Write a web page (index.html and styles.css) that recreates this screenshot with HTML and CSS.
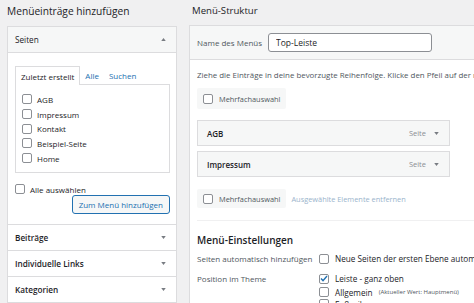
FILE: index.html
```html
<!DOCTYPE html>
<html lang="de">
<head>
    <meta charset="UTF-8" />
    <title>Menüs</title>
    <link rel="stylesheet" href="styles.css">
</head>
<body>
    <div class="page">
        <div class="col-left">
            <h2 class="col-title">Menüeinträge hinzufügen</h2>
            <div class="accordion">
                <div class="acc-section open">
                    <div class="acc-title">
                        <span>Seiten</span>
                        <svg class="arrow" width="5" height="3" viewBox="0 0 6 4"><path d="M0 4 L3 0 L6 4 Z" fill="#787c82"/></svg>
                    </div>
                    <div class="acc-body">
                        <div class="tabs">
                            <span class="tab active">Zuletzt erstellt</span>
                            <span class="tab">Alle</span>
                            <span class="tab">Suchen</span>
                        </div>
                        <div class="tab-panel">
                            <label class="check-row"><span class="box"></span>AGB</label>
                            <label class="check-row"><span class="box"></span>Impressum</label>
                            <label class="check-row"><span class="box"></span>Kontakt</label>
                            <label class="check-row"><span class="box"></span>Beispiel-Seite</label>
                            <label class="check-row"><span class="box"></span>Home</label>
                        </div>
                        <label class="check-row select-all"><span class="box"></span>Alle auswählen</label>
                        <div class="add-row">
                            <button class="btn-secondary">Zum Menü hinzufügen</button>
                        </div>
                    </div>
                </div>
                <div class="acc-section">
                    <div class="acc-title">
                        <span>Beiträge</span>
                        <svg class="arrow" width="5" height="3" viewBox="0 0 6 4"><path d="M0 0 L3 4 L6 0 Z" fill="#787c82"/></svg>
                    </div>
                </div>
                <div class="acc-section">
                    <div class="acc-title">
                        <span>Individuelle Links</span>
                        <svg class="arrow" width="5" height="3" viewBox="0 0 6 4"><path d="M0 0 L3 4 L6 0 Z" fill="#787c82"/></svg>
                    </div>
                </div>
                <div class="acc-section">
                    <div class="acc-title">
                        <span>Kategorien</span>
                        <svg class="arrow" width="5" height="3" viewBox="0 0 6 4"><path d="M0 0 L3 4 L6 0 Z" fill="#787c82"/></svg>
                    </div>
                </div>
            </div>
        </div>

        <div class="col-right">
            <h2 class="col-title">Menü-Struktur</h2>
            <div class="menu-panel">
                <div class="menu-header">
                    <span class="muted">Name des Menüs</span>
                    <input class="menu-name" type="text" value="Top-Leiste" />
                </div>
                <div class="menu-body">
                    <p class="hint">Ziehe die Einträge in deine bevorzugte Reihenfolge. Klicke den Pfeil auf der rechten Seite des Eintrags, um weitere Optionen anzuzeigen.</p>
                    <div class="bulk-row">
                        <label class="bulk-toggle"><span class="box"></span>Mehrfachauswahl</label>
                    </div>
                    <ul class="menu-items">
                        <li class="menu-item">
                            <span class="item-title">AGB</span>
                            <span class="item-type">Seite</span>
                            <svg class="arrow" width="5" height="3" viewBox="0 0 6 4"><path d="M0 0 L3 4 L6 0 Z" fill="#787c82"/></svg>
                        </li>
                        <li class="menu-item">
                            <span class="item-title">Impressum</span>
                            <span class="item-type">Seite</span>
                            <svg class="arrow" width="5" height="3" viewBox="0 0 6 4"><path d="M0 0 L3 4 L6 0 Z" fill="#787c82"/></svg>
                        </li>
                    </ul>
                    <div class="bulk-row">
                        <label class="bulk-toggle"><span class="box"></span>Mehrfachauswahl</label>
                        <span class="link-disabled">Ausgewählte Elemente entfernen</span>
                    </div>

                    <div class="settings">
                        <h3>Menü-Einstellungen</h3>
                        <div class="setting">
                            <span class="muted setting-label">Seiten automatisch hinzufügen</span>
                            <div class="setting-opts">
                                <label class="opt"><span class="box"></span>Neue Seiten der ersten Ebene automatisch diesem Menü hinzufügen</label>
                            </div>
                        </div>
                        <div class="setting">
                            <span class="muted setting-label">Position im Theme</span>
                            <div class="setting-opts">
                                <label class="opt"><span class="box checked"><svg width="8" height="7" viewBox="0 0 8 7"><path d="M1 3.6 L3 5.6 L7 1" fill="none" stroke="#2271b1" stroke-width="1.4"/></svg></span>Leiste - ganz oben</label>
                                <label class="opt"><span class="box"></span>Allgemein <small>(Aktueller Wert: Hauptmenü)</small></label>
                                <label class="opt"><span class="box"></span>Fußzeile</label>
                            </div>
                        </div>
                    </div>
                </div>
            </div>
        </div>
    </div>
</body>
</html>
```

FILE: styles.css
```css
:root {
    --bg: #f0f0f1;
    --panel: #ffffff;
    --soft: #f6f7f7;
    --line: #dcdcde;
    --text: #1d2327;
    --muted: #50575e;
    --blue: #2271b1;
}

html,
body {
    height: 303px;
}

body {
    margin: 0;
    background-color: var(--bg);
    color: var(--text);
    font-family: 'Open Sans', 'Noto Sans', Arial, sans-serif;
    font-size: 8px;
    overflow: hidden;
}

.page {
    display: flex;
    gap: 12px;
    padding-left: 7px;
    width: 640px;
}

.col-left {
    width: 170px;
    flex-shrink: 0;
}

.col-right {
    width: 340px;
    flex-shrink: 0;
}

.col-title {
    margin: 0;
    height: 25px;
    line-height: 22px;
    font-size: 10.2px;
    font-weight: 400;
    color: var(--text);
}

.col-right .col-title {
    padding-left: 3px;
    font-size: 9.6px;
}

/* left accordion */
.accordion {
    background-color: var(--panel);
    border: 1px solid var(--line);
    margin-top: 1px;
}

.acc-section + .acc-section {
    border-top: 1px solid var(--line);
}

.acc-title {
    height: 25px;
    display: flex;
    align-items: center;
    justify-content: space-between;
    padding: 0 10px 0 7px;
    font-size: 8.2px;
    font-weight: 600;
}

.open .acc-title {
    background-color: var(--soft);
    border-bottom: 1px solid var(--line);
    font-weight: 400;
}

.acc-body {
    padding: 13px 6px 10px 7px;
}

.tabs {
    display: flex;
    height: 18px;
    align-items: stretch;
}

.tab {
    display: flex;
    align-items: center;
    padding: 0 5px;
    color: var(--blue);
}

.tab.active {
    color: var(--text);
    border: 1px solid var(--line);
    border-bottom: none;
    background-color: var(--panel);
    margin-bottom: -1px;
    position: relative;
}

.tab-panel {
    border: 1px solid var(--line);
    height: 78px;
    padding: 7px 6px 2px;
}

.check-row {
    display: flex;
    align-items: center;
    gap: 5px;
    height: 14.7px;
    color: var(--text);
}

.box {
    display: inline-flex;
    align-items: center;
    justify-content: center;
    width: 8px;
    height: 8px;
    border: 1px solid #8c8f94;
    border-radius: 2px;
    background-color: #fff;
    flex-shrink: 0;
}

.select-all {
    margin-top: 10px;
    height: 12px;
}

.add-row {
    display: flex;
    justify-content: flex-end;
}

.btn-secondary {
    height: 19px;
    padding: 0 6px;
    font-family: inherit;
    font-size: 8px;
    color: var(--blue);
    background-color: var(--soft);
    border: 1px solid var(--blue);
    border-radius: 3px;
}

/* right panel */
.menu-panel {
    background-color: var(--panel);
    border: 1px solid var(--line);
    border-right: none;
}

.menu-header {
    height: 33px;
    display: flex;
    align-items: center;
    gap: 6px;
    padding-left: 7px;
    background-color: var(--soft);
    border-bottom: 1px solid var(--line);
}

.muted {
    color: var(--muted);
}

.menu-name {
    width: 164px;
    height: 19px;
    box-sizing: border-box;
    padding: 0 7px;
    font-family: inherit;
    font-size: 8.5px;
    color: var(--text);
    border: 1px solid #8c8f94;
    border-radius: 3px;
    background-color: #fff;
}

.menu-body {
    padding: 0 0 0 7px;
}

.hint {
    margin: 9px 0 7px;
    line-height: 12px;
    font-size: 7.9px;
    white-space: nowrap;
    color: var(--muted);
}

.bulk-row {
    display: flex;
    align-items: center;
    gap: 5px;
    font-size: 7.4px;
}

.bulk-toggle {
    display: flex;
    align-items: center;
    gap: 6px;
    height: 21px;
    padding: 0 6px;
    background-color: var(--soft);
    border-radius: 2px;
    color: var(--muted);
}

.menu-items + .bulk-row .bulk-toggle {
    height: 19px;
}

.link-disabled {
    color: #9ab4cc;
}

.menu-items {
    list-style: none;
    margin: 11px 0 12px;
    padding: 0;
    width: 253px;
}

.menu-item {
    display: flex;
    align-items: center;
    height: 24px;
    padding: 0 10px 0 9px;
    background-color: var(--soft);
    border: 1px solid var(--line);
    font-weight: 600;
}

.menu-item + .menu-item {
    margin-top: 5px;
}

.item-title {
    flex: 1;
}

.item-type {
    font-weight: 400;
    font-size: 7.5px;
    color: #8c8f94;
    margin-right: 8px;
}

.settings {
    margin-top: 12px;
    border-top: 1px solid #f0f0f1;
    padding-top: 12px;
}

.settings h3 {
    margin: 0 0 4px;
    font-size: 10px;
    font-weight: 600;
    line-height: 14px;
}

.setting {
    display: flex;
    margin-bottom: 5px;
}

.setting-label {
    width: 122px;
    flex-shrink: 0;
    line-height: 15px;
    white-space: nowrap;
}

.setting-opts {
    display: flex;
    flex-direction: column;
}

.opt {
    display: flex;
    align-items: center;
    gap: 6px;
    height: 12px;
    white-space: nowrap;
    font-size: 8.2px;
}

.setting-opts .opt:first-child {
    height: 15px;
}

.opt small {
    font-size: 6px;
    color: var(--muted);
}
```
